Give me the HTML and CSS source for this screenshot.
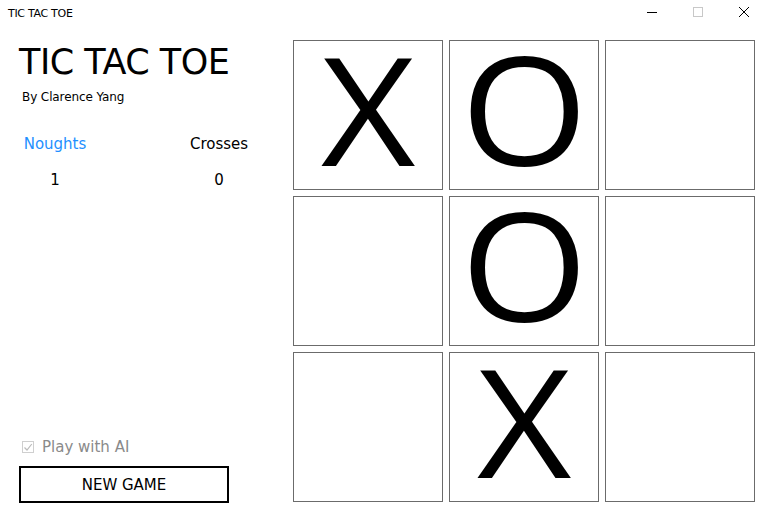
FILE: index.html
```html
<!DOCTYPE html>
<html>
<head>
<meta charset="utf-8">
<link rel="stylesheet" href="styles.css">
</head>
<body>
<div class="window">
  <div class="titlebar">
    <div class="wintitle">TIC TAC TOE</div>
    <div class="controls">
      <div class="ctl"><svg width="10" height="10" viewBox="0 0 10 10"><path d="M0 5.5H10" stroke="#000" stroke-width="1"/></svg></div>
      <div class="ctl"><svg width="10" height="10" viewBox="0 0 10 10"><rect x="0.5" y="0.5" width="9" height="9" fill="none" stroke="#c8c8c8" stroke-width="1"/></svg></div>
      <div class="ctl"><svg width="10" height="10" viewBox="0 0 10 10"><path d="M0 0L10 10M10 0L0 10" stroke="#000" stroke-width="1"/></svg></div>
    </div>
  </div>
  <div class="main">
    <div class="left">
      <h1 class="title">TIC TAC TOE</h1>
      <div class="author">By Clarence Yang</div>
      <div class="scores">
        <div class="label noughts">Noughts</div>
        <div class="label">Crosses</div>
        <div class="num">1</div>
        <div class="num">0</div>
      </div>
      <div class="bottom">
        <label class="check">
          <span class="box"><svg width="12" height="12" viewBox="0 0 12 12"><path d="M2.5 6.5L5 9L9.8 3" fill="none" stroke="#bbb" stroke-width="1.2"/></svg></span>
          <span class="checktext">Play with AI</span>
        </label>
        <div class="newgame">NEW GAME</div>
      </div>
    </div>
    <div class="board">
      <div class="cell"><span class="mark">X</span></div>
      <div class="cell"><span class="mark">O</span></div>
      <div class="cell"></div>
      <div class="cell"></div>
      <div class="cell"><span class="mark">O</span></div>
      <div class="cell"></div>
      <div class="cell"></div>
      <div class="cell"><span class="mark">X</span></div>
      <div class="cell"></div>
    </div>
  </div>
</div>
</body>
</html>
```
FILE: styles.css
```css
html, body {
  margin: 0;
  padding: 0;
  background: #fff;
}
.window {
  width: 767px;
  height: 527px;
  font-family: "DejaVu Sans", "Lato", sans-serif;
  color: #000;
  display: flex;
  flex-direction: column;
}
.titlebar {
  height: 30px;
  display: flex;
  justify-content: space-between;
  align-items: flex-start;
}
.wintitle {
  font-size: 11px;
  padding: 7px 0 0 8px;
  letter-spacing: -0.3px;
}
.controls {
  display: flex;
}
.ctl {
  width: 46px;
  height: 24px;
  display: flex;
  align-items: center;
  justify-content: center;
}
.main {
  flex: 1;
  display: flex;
}
.left {
  width: 274px;
  padding-left: 19px;
  padding-bottom: 24px;
  display: flex;
  flex-direction: column;
}
.title {
  margin: 10px 0 0 0;
  font-weight: normal;
  font-size: 35px;
  line-height: 44px;
  letter-spacing: -0.5px;
}
.author {
  font-size: 12px;
  margin: 6px 0 0 3px;
  letter-spacing: -0.1px;
}
.scores {
  display: grid;
  grid-template-columns: 72px 72px;
  column-gap: 92px;
  row-gap: 18px;
  margin-top: 31px;
  text-align: center;
  font-size: 15px;
}
.noughts {
  color: #1e90ff;
}
.bottom {
  margin-top: auto;
}
.check {
  display: flex;
  align-items: center;
  gap: 8px;
  margin-left: 3px;
  color: #8a8a8a;
  font-size: 15px;
}
.box {
  width: 12px;
  height: 12px;
  border: 1px solid #cfcfcf;
  box-sizing: border-box;
  display: flex;
  align-items: center;
  justify-content: center;
}
.box svg {
  flex: none;
}
.newgame {
  margin-top: 10px;
  width: 210px;
  height: 37px;
  box-sizing: border-box;
  border: 2px solid #000;
  display: flex;
  align-items: center;
  justify-content: center;
  font-size: 15px;
}
.board {
  margin-top: 10px;
  display: grid;
  grid-template-columns: repeat(3, 150px);
  grid-template-rows: repeat(3, 150px);
  gap: 6px;
  align-self: flex-start;
}
.cell {
  box-sizing: border-box;
  border: 1px solid #6b6b6b;
  display: flex;
  align-items: center;
  justify-content: center;
}
.mark {
  font-family: "Open Sans", sans-serif;
  font-size: 150px;
  line-height: 110px;
  display: block;
  transform: translateY(-7px) scaleX(1.09);
}
```
